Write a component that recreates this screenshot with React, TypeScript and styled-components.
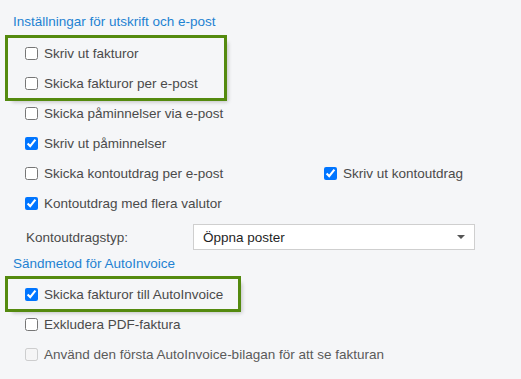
import styled, { createGlobalStyle } from "styled-components"

const Global = createGlobalStyle`
  body {
    margin: 0;
    background: #f5f6f8;
    font-family: "Liberation Sans", Arial, sans-serif;
  }
`

const Page = styled.div`
  padding: 12px 0 0 13px;
  width: 521px;
  height: 379px;
  box-sizing: border-box;
  color: #4a4a4a;
  font-size: 13.5px;
`

const Heading = styled.div<{ $gap?: number }>`
  color: #1e82d2;
  line-height: 20px;
  margin-top: ${({ $gap }) => $gap || 0}px;
`

const Highlight = styled.div<{ $width: number; $gap: number }>`
  width: ${({ $width }) => $width}px;
  margin: ${({ $gap }) => $gap}px 0 0 -5px;
  padding-left: 5px;
  box-sizing: border-box;
  outline: 3px solid #548a0f;
  box-shadow: 4px 4px 4px rgba(0, 0, 0, 0.22);
`

const Row = styled.div`
  display: flex;
  align-items: center;
  height: 30px;
  padding-left: 12px;
`

const TwoCols = styled.div`
  display: grid;
  grid-template-columns: 299px auto;
  padding-left: 12px;
  height: 30px;
  align-items: center;
`

const Check = styled.label<{ $disabled?: boolean }>`
  display: flex;
  align-items: center;
  gap: 6px;
  white-space: nowrap;
  color: ${({ $disabled }) => ($disabled ? "#5a5a5a" : "inherit")};

  input {
    margin: 0;
    width: 13px;
    height: 13px;
  }
`

const SelectRow = styled.div`
  display: grid;
  grid-template-columns: 167px 282px;
  align-items: center;
  padding-left: 13px;
  margin-top: 6px;
`

const Select = styled.div`
  height: 26px;
  box-sizing: border-box;
  background: #fff;
  border: 1px solid #cfcfcf;
  display: flex;
  align-items: center;
  justify-content: space-between;
  padding: 0 9px 0 9px;
  color: #1f1f1f;
`

const Caret = styled.span`
  width: 0;
  height: 0;
  border-left: 4px solid transparent;
  border-right: 4px solid transparent;
  border-top: 4px solid #555;
`

type BoxProps = { label: string; checked?: boolean; disabled?: boolean }

function Box({ label, checked, disabled }: BoxProps) {
  return (
    <Check $disabled={disabled}>
      <input type="checkbox" defaultChecked={checked} disabled={disabled} />
      {label}
    </Check>
  )
}

export default function App() {
  return (
    <Page>
      <Global />
      <Heading>Inställningar för utskrift och e-post</Heading>

      <Highlight $width={216} $gap={6}>
        <Row><Box label="Skriv ut fakturor" /></Row>
        <Row><Box label="Skicka fakturor per e-post" /></Row>
      </Highlight>

      <Row><Box label="Skicka påminnelser via e-post" /></Row>
      <Row><Box label="Skriv ut påminnelser" checked /></Row>
      <TwoCols>
        <Box label="Skicka kontoutdrag per e-post" />
        <Box label="Skriv ut kontoutdrag" checked />
      </TwoCols>
      <Row><Box label="Kontoutdrag med flera valutor" checked /></Row>

      <SelectRow>
        <span>Kontoutdragstyp:</span>
        <Select>
          <span>Öppna poster</span>
          <Caret />
        </Select>
      </SelectRow>

      <Heading $gap={4}>Sändmetod för AutoInvoice</Heading>

      <Highlight $width={230} $gap={5}>
        <Row><Box label="Skicka fakturor till AutoInvoice" checked /></Row>
      </Highlight>

      <Row><Box label="Exkludera PDF-faktura" /></Row>
      <Row><Box label="Använd den första AutoInvoice-bilagan för att se fakturan" disabled /></Row>
    </Page>
  )
}
